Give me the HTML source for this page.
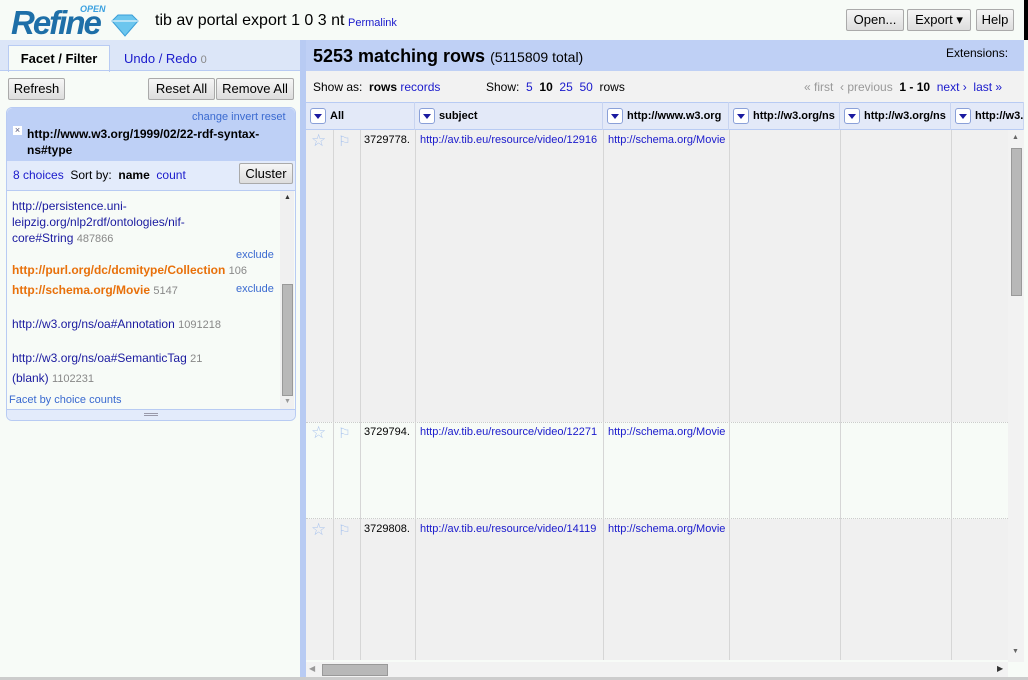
<!DOCTYPE html>
<html><head><style>
*{box-sizing:border-box;margin:0;padding:0}
body{width:1028px;height:680px;overflow:hidden;background:#f7fbf7;font-family:"Liberation Sans",sans-serif;font-size:13px;position:relative;color:#000}
.a{position:absolute}
a,.lk{color:#1a1acc;text-decoration:none}
.btn{position:absolute;border:1px solid #aaa;border-radius:2px;background:linear-gradient(#f6f6f6,#ddd);font-size:13px;text-align:center;line-height:20px;height:22px}
.dd{display:inline-block;width:16px;height:16px;border:1px solid #8aa0d8;border-radius:3px;background:#fff;vertical-align:middle;position:relative;margin-right:4px}
.dd:after{content:"";position:absolute;left:3px;top:5px;border-left:4px solid transparent;border-right:4px solid transparent;border-top:5px solid #1a1aa0}
.hc{position:absolute;top:102px;height:28px;line-height:28px;font-weight:bold;font-size:11px;padding-left:4px;border-right:1px solid #c8d4f0;white-space:nowrap;overflow:hidden}
.vl{position:absolute;top:130px;height:530px;width:1px;background:#d6d6d6}
.cell{position:absolute;font-size:11px;white-space:nowrap}
.g{color:#888;font-size:11px}
</style></head><body>
<div class="a" style="left:11px;top:4px;font-size:33px;font-weight:bold;font-style:italic;color:#1e6fa8;letter-spacing:-2px">Refine</div>
<div class="a" style="left:80px;top:4px;font-size:9px;font-weight:bold;font-style:italic;color:#3aa0e0">OPEN</div>
<svg class="a" style="left:110px;top:14px" width="30" height="24"><polygon points="2,7 8,1 22,1 28,7 15,22" fill="#6cc6ee" stroke="#3a9ed8"/><polyline points="2,7 28,7" stroke="#fff" fill="none"/></svg>
<div class="a" style="left:155px;top:12px;font-size:16px">tib av portal export 1 0 3 nt</div>
<div class="a lk" style="left:348px;top:17px;font-size:11px">Permalink</div>
<div class="btn" style="left:846px;top:9px;width:58px">Open...</div>
<div class="btn" style="left:907px;top:9px;width:64px">Export ▾</div>
<div class="btn" style="left:976px;top:9px;width:38px">Help</div>
<div class="a" style="left:1024px;top:0;width:4px;height:40px;background:#000"></div>

<!-- left -->
<div class="a" style="left:0;top:40px;width:300px;height:30px;background:#dce6f8"></div>
<div class="a" style="left:8px;top:45px;width:102px;height:27px;background:#f7fbf7;border:1px solid #b8cbf3;border-bottom:none;font-size:13px;font-weight:bold;text-align:center;line-height:26px">Facet / Filter</div>
<div class="a lk" style="left:124px;top:51px;font-size:13px">Undo / Redo <span class="g">0</span></div>
<div class="a" style="left:0;top:70px;width:300px;height:1px;background:#b8cbf3"></div>
<div class="btn" style="left:8px;top:78px;width:57px">Refresh</div>
<div class="btn" style="left:148px;top:78px;width:67px">Reset All</div>
<div class="btn" style="left:216px;top:78px;width:78px">Remove All</div>
<div class="a" style="left:6px;top:107px;width:290px;height:314px;border:1px solid #b8cbf3;border-radius:6px;background:#f7fbf7"></div>
<div class="a" style="left:7px;top:108px;width:288px;height:53px;background:#bed0f6;border-radius:6px 6px 0 0"></div>
<div class="a" style="left:192px;top:111px;font-size:11px;color:#3a6ad0">change invert reset</div>
<div class="a" style="left:13px;top:126px;width:9px;height:9px;background:#fff;color:#557;font-size:9px;line-height:9px;text-align:center">×</div>
<div class="a" style="left:27px;top:126px;font-size:12px;font-weight:bold;width:265px;line-height:16px">http://www.w3.org/1999/02/22-rdf-syntax-ns#type</div>
<div class="a" style="left:7px;top:161px;width:288px;height:29px;background:#e3ebfb"></div>
<div class="a" style="left:13px;top:168px;font-size:12px"><span class="lk">8 choices</span> &nbsp;Sort by: &nbsp;<b>name</b> &nbsp;<span class="lk">count</span></div>
<div class="btn" style="left:239px;top:163px;width:54px;height:21px;line-height:19px">Cluster</div>
<div class="a" style="left:7px;top:190px;width:288px;height:1px;background:#b8cbf3"></div>
<div class="a" style="left:12px;top:198px;font-size:12px;line-height:16px;color:#1a1aa0;width:260px">http://persistence.uni-<br>leipzig.org/nlp2rdf/ontologies/nif-<br>core#String <span class="g">487866</span></div>
<div class="a" style="left:236px;top:249px;font-size:11px;color:#3a6ad0">exclude</div>
<div class="a" style="left:12px;top:263px;font-size:12px;font-weight:bold;color:#e8700a">http://purl.org/dc/dcmitype/Collection <span class="g" style="font-weight:normal">106</span></div>
<div class="a" style="left:236px;top:283px;font-size:11px;color:#3a6ad0">exclude</div>
<div class="a" style="left:12px;top:283px;font-size:12px;font-weight:bold;color:#e8700a">http://schema.org/Movie <span class="g" style="font-weight:normal">5147</span></div>
<div class="a" style="left:12px;top:317px;font-size:12px;color:#1a1aa0">http://w3.org/ns/oa#Annotation <span class="g">1091218</span></div>
<div class="a" style="left:12px;top:351px;font-size:12px;color:#1a1aa0">http://w3.org/ns/oa#SemanticTag <span class="g">21</span></div>
<div class="a" style="left:12px;top:371px;font-size:12px;color:#1a1aa0">(blank) <span class="g">1102231</span></div>
<div class="a" style="left:9px;top:394px;font-size:11px;color:#3a6ad0">Facet by choice counts</div>
<div class="a" style="left:280px;top:191px;width:14px;height:218px;background:#f0f0f0"></div>
<div class="a" style="left:282px;top:284px;width:11px;height:112px;background:#b8b8b8;border:1px solid #999"></div>
<div class="a" style="left:284px;top:194px;font-size:7px;color:#333">▲</div>
<div class="a" style="left:284px;top:398px;font-size:7px;color:#999">▼</div>
<div class="a" style="left:7px;top:409px;width:288px;height:11px;background:#e3ebfb;border-radius:0 0 6px 6px;border-top:1px solid #b8cbf3"></div>
<div class="a" style="left:144px;top:413px;width:14px;height:3px;border-top:1px solid #99a;border-bottom:1px solid #99a"></div>

<!-- right -->
<div class="a" style="left:300px;top:40px;width:6px;height:640px;background:#b8cbf3"></div>
<div class="a" style="left:306px;top:40px;width:718px;height:31px;background:#bfd0f5"></div>
<div class="a" style="left:313px;top:46px;font-size:18px;font-weight:bold">5253 matching rows <span style="font-size:14px;font-weight:normal">(5115809 total)</span></div>
<div class="a" style="left:946px;top:46px;font-size:12px">Extensions:</div>
<div class="a" style="left:306px;top:71px;width:718px;height:31px;background:#f2f2f2"></div>
<div class="a" style="left:313px;top:80px;font-size:12px">Show as: &nbsp;<b>rows</b> <span class="lk">records</span></div>
<div class="a" style="left:486px;top:80px;font-size:12px">Show: &nbsp;<span class="lk">5</span> &nbsp;<b>10</b> &nbsp;<span class="lk">25</span> &nbsp;<span class="lk">50</span> &nbsp;rows</div>
<div class="a" style="left:804px;top:80px;font-size:12px"><span style="color:#999">« first &nbsp;‹ previous</span> &nbsp;<b>1 - 10</b> &nbsp;<span class="lk">next ›</span> &nbsp;<span class="lk">last »</span></div>
<div class="a" style="left:306px;top:102px;width:718px;height:28px;background:#e3e9f8;border-top:1px solid #b8cbf3;border-bottom:1px solid #b8cbf3"></div>
<div class="hc" style="left:306px;width:109px"><span class="dd"></span>All</div>
<div class="hc" style="left:415px;width:188px"><span class="dd"></span>subject</div>
<div class="hc" style="left:603px;width:126px"><span class="dd"></span>http://www.w3.org</div>
<div class="hc" style="left:729px;width:111px"><span class="dd"></span>http://w3.org/ns</div>
<div class="hc" style="left:840px;width:111px"><span class="dd"></span>http://w3.org/ns</div>
<div class="hc" style="left:951px;width:73px"><span class="dd"></span>http://w3.</div>

<div class="a" style="left:306px;top:130px;width:702px;height:530px;background:#f0f0f0"></div>
<div class="a" style="left:306px;top:422px;width:702px;height:97px;background:#f7fbf7;border-top:1px dotted #ccc;border-bottom:1px dotted #ccc"></div>
<div class="vl" style="left:333px"></div><div class="vl" style="left:360px"></div><div class="vl" style="left:415px"></div><div class="vl" style="left:603px"></div><div class="vl" style="left:729px"></div><div class="vl" style="left:840px"></div><div class="vl" style="left:951px"></div>

<div class="cell" style="left:311px;top:131px;color:#aac4ee;font-size:17px">☆</div>
<div class="cell" style="left:338px;top:133px;color:#aac4ee;font-size:14px">⚐</div>
<div class="cell" style="left:364px;top:134px">3729778.</div>
<div class="cell lk" style="left:420px;top:134px">http://av.tib.eu/resource/video/12916</div>
<div class="cell lk" style="left:608px;top:134px">http://schema.org/Movie</div>

<div class="cell" style="left:311px;top:423px;color:#aac4ee;font-size:17px">☆</div>
<div class="cell" style="left:338px;top:425px;color:#aac4ee;font-size:14px">⚐</div>
<div class="cell" style="left:364px;top:426px">3729794.</div>
<div class="cell lk" style="left:420px;top:426px">http://av.tib.eu/resource/video/12271</div>
<div class="cell lk" style="left:608px;top:426px">http://schema.org/Movie</div>

<div class="cell" style="left:311px;top:520px;color:#aac4ee;font-size:17px">☆</div>
<div class="cell" style="left:338px;top:522px;color:#aac4ee;font-size:14px">⚐</div>
<div class="cell" style="left:364px;top:523px">3729808.</div>
<div class="cell lk" style="left:420px;top:523px">http://av.tib.eu/resource/video/14119</div>
<div class="cell lk" style="left:608px;top:523px">http://schema.org/Movie</div>

<div class="a" style="left:1008px;top:130px;width:16px;height:532px;background:#f2f2f2"></div>
<div class="a" style="left:1011px;top:148px;width:11px;height:148px;background:#b8b8b8;border:1px solid #999"></div>
<div class="a" style="left:1012px;top:134px;font-size:7px;color:#666">▲</div>
<div class="a" style="left:1012px;top:648px;font-size:7px;color:#666">▼</div>
<div class="a" style="left:306px;top:662px;width:702px;height:15px;background:#f2f2f2"></div>
<div class="a" style="left:322px;top:664px;width:66px;height:12px;background:#b8b8b8;border:1px solid #999"></div>
<div class="a" style="left:309px;top:664px;font-size:8px;color:#999">◀</div>
<div class="a" style="left:997px;top:664px;font-size:8px;color:#333">▶</div>
<div class="a" style="left:0;top:677px;width:1028px;height:3px;background:#ccc"></div>
</body></html>
